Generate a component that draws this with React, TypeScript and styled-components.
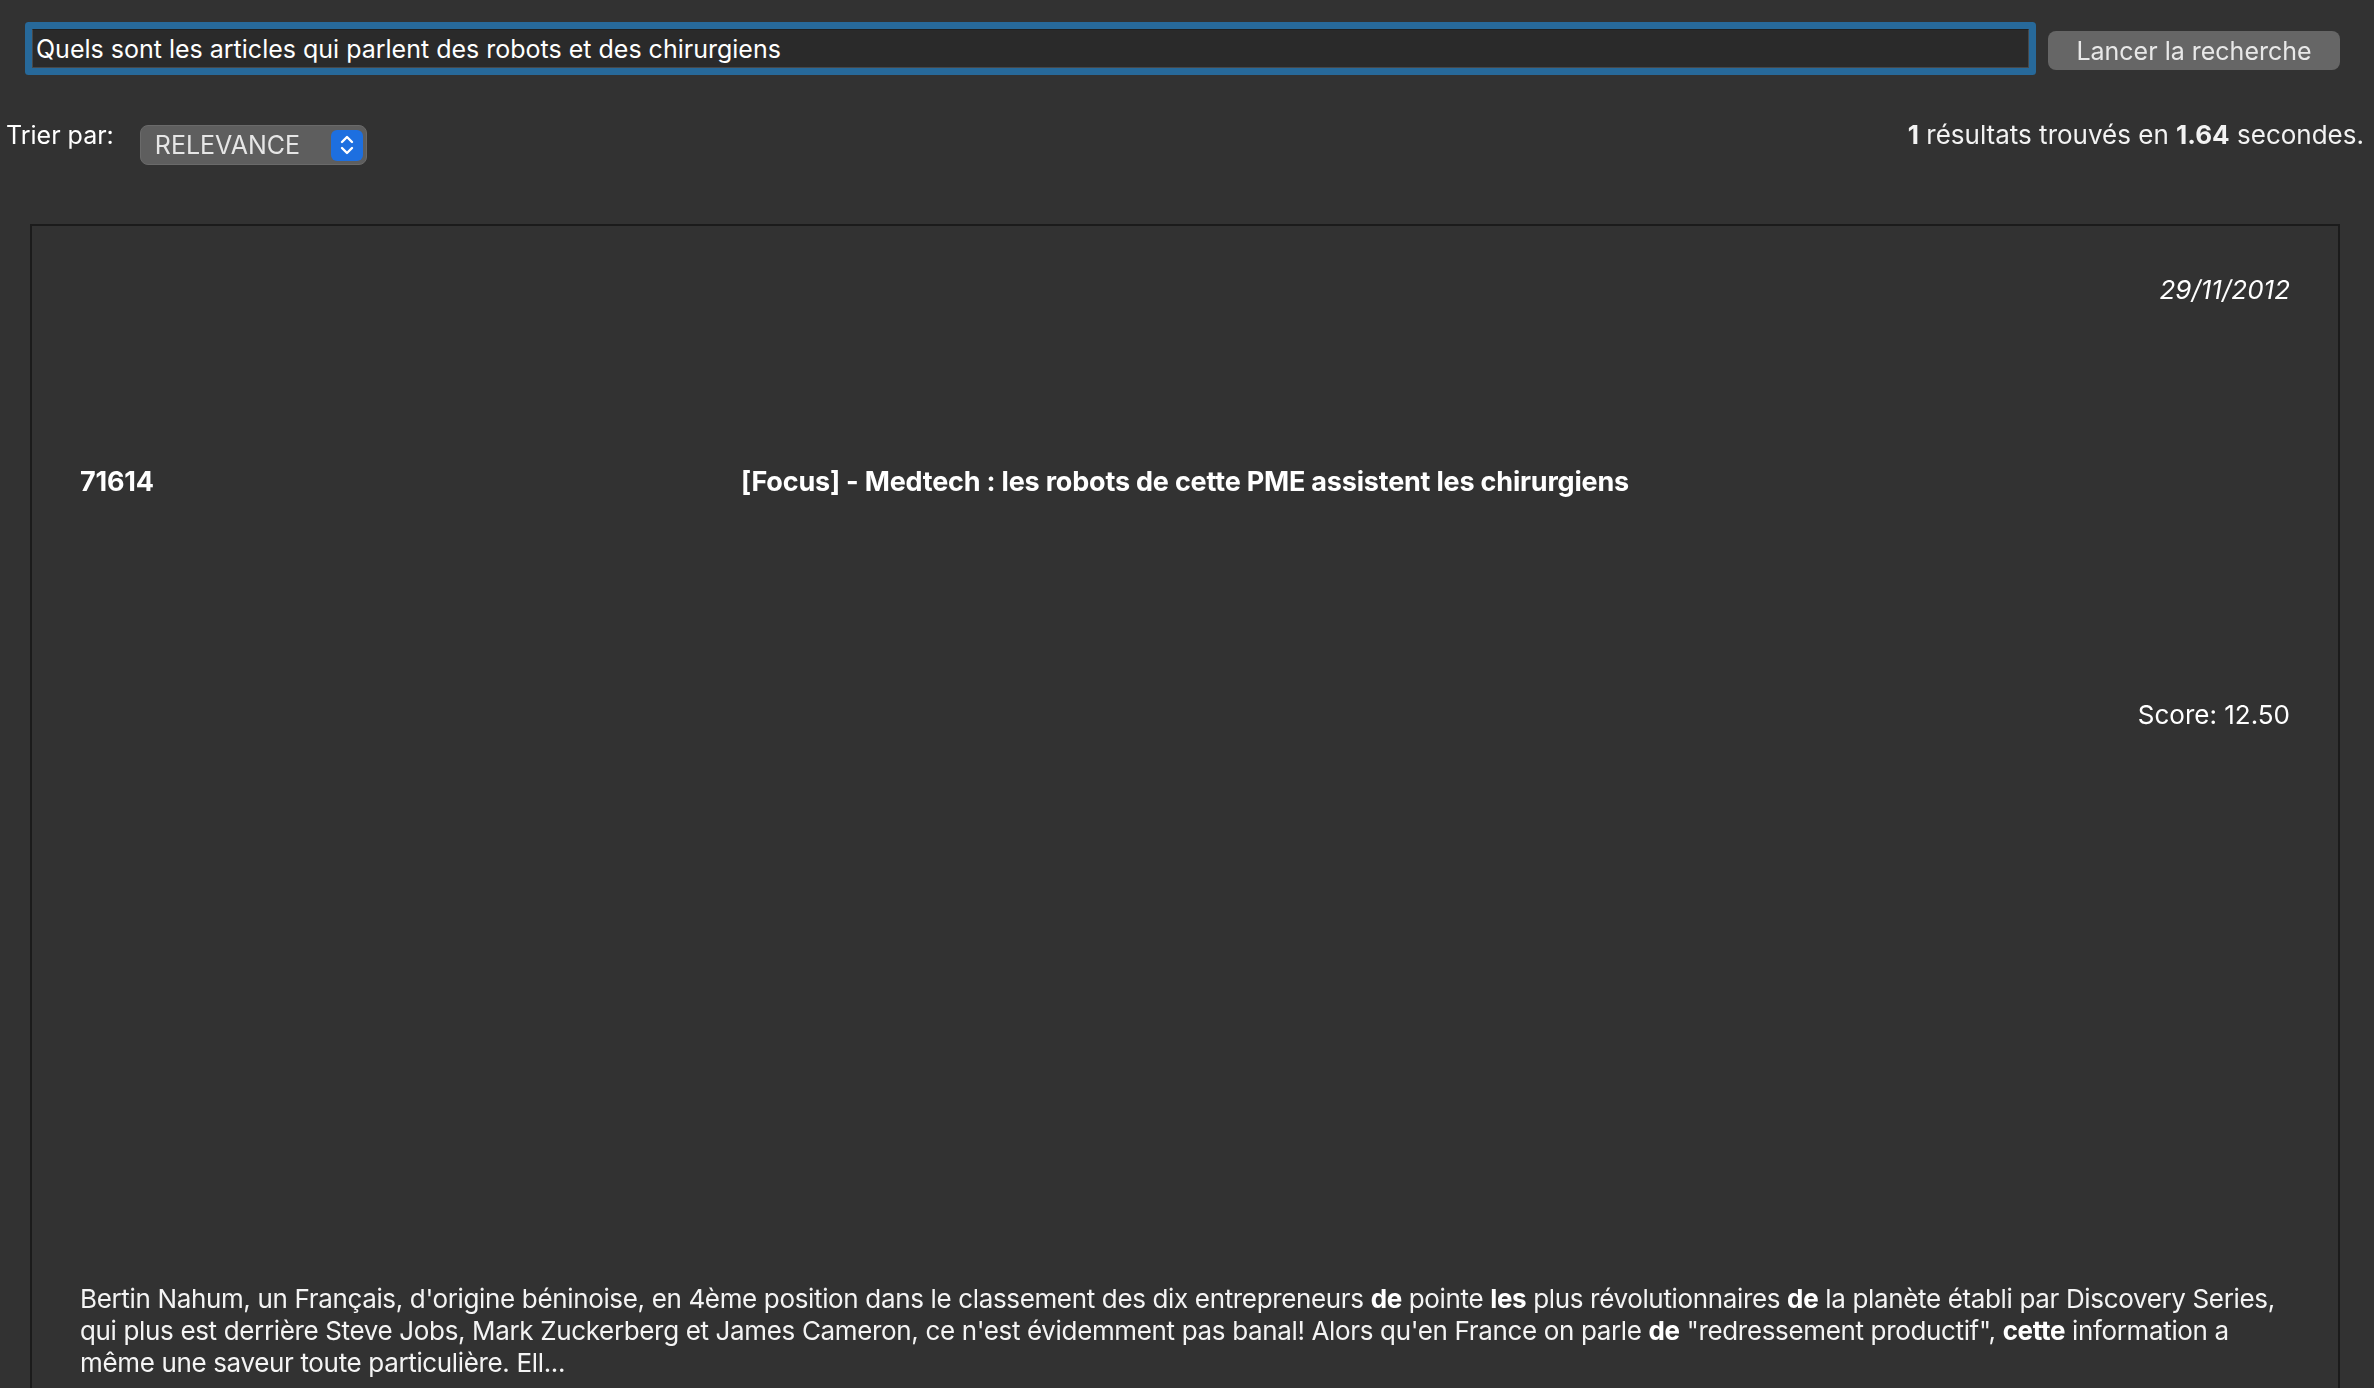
import React from 'react'
import styled, { createGlobalStyle } from 'styled-components'

const GlobalStyle = createGlobalStyle`
    html, body {
        margin: 0;
        padding: 0;
        background-color: #323232;
        color: #ffffff;
        font-family: Inter, "Noto Sans", "Liberation Sans", sans-serif;
    }
`

const Page = styled.div`
    min-height: 100vh;
    background-color: #323232;
`

const SearchBar = styled.form`
    display: flex;
    align-items: flex-start;
    padding: 29px 34px 0 32px;
`

const SearchInput = styled.input`
    flex: 1;
    height: 39px;
    box-sizing: border-box;
    padding: 0 3px;
    background-color: #2a2a2a;
    border: 1px solid #484848;
    border-top-color: #202020;
    border-radius: 1px;
    box-shadow: 0 0 0 7px #27699a;
    color: #ffffff;
    caret-color: #ffffff;
    font-family: inherit;
    font-size: 25px;
    outline: none;
`

const SearchButton = styled.button`
    flex-shrink: 0;
    width: 292px;
    height: 39px;
    margin: 2px 0 0 19px;
    padding: 0;
    border: none;
    border-radius: 8px;
    background-color: #666666;
    color: #e8e8e8;
    font-family: inherit;
    font-size: 25px;

    &:hover {
        opacity: 0.8;
        cursor: pointer;
    }
`

const Toolbar = styled.div`
    display: flex;
    align-items: flex-start;
    justify-content: space-between;
    margin-top: 49px;
    padding: 0 10px 0 6px;
    font-size: 26px;
    line-height: 32px;
`

const SortGroup = styled.div`
    display: flex;
    align-items: flex-start;
    gap: 26px;
    font-size: 25px;
`

const SelectBox = styled.div`
    display: flex;
    align-items: center;
    width: 227px;
    height: 40px;
    box-sizing: border-box;
    margin-top: 6px;
    padding: 0 3px 0 14px;
    background-color: #5e5e5e;
    border: 1px solid #6a6a6a;
    border-radius: 8px;
`

const Select = styled.select`
    flex: 1;
    appearance: none;
    border: none;
    background: transparent;
    color: #e6e6e6;
    font-family: inherit;
    font-size: 25px;
    padding: 0;
    outline: none;
`

const ChevronBox = styled.div`
    display: flex;
    align-items: center;
    justify-content: center;
    width: 32px;
    height: 31px;
    border-radius: 6px;
    background-color: #1d6fe0;
    pointer-events: none;
`

const Stats = styled.div`
    color: #f2f2f2;
`

const Card = styled.div`
    margin: 59px 34px 0 30px;
    padding: 48px;
    border: 2px solid #1b1b1b;
    font-size: 26px;
    line-height: 32px;
`

const DateLine = styled.div`
    text-align: right;
    font-style: italic;
`

const TitleRow = styled.div`
    display: grid;
    grid-template-columns: 1fr auto 1fr;
    margin-top: 160px;
    font-size: 27px;
    font-weight: 700;
    letter-spacing: -0.2px;
`

const Score = styled.div`
    margin-top: 201px;
    text-align: right;
`

const Snippet = styled.p`
    margin: 552px 0 0 0;
    color: #f4f4f4;
    letter-spacing: -0.35px;
`

const Hit = styled.strong`
    font-weight: 700;
    color: #ffffff;
`

function Chevrons() {
    return (
        <svg width="16" height="22" viewBox="0 0 16 22" fill="none" stroke="#ffffff" strokeWidth="2.4" strokeLinecap="round" strokeLinejoin="round">
            <polyline points="3,8 8,3 13,8" />
            <polyline points="3,14 8,19 13,14" />
        </svg>
    )
}

export default function App() {
    return (
        <Page>
            <GlobalStyle />
            <SearchBar onSubmit={(e) => e.preventDefault()}>
                <SearchInput
                    autoFocus
                    defaultValue="Quels sont les articles qui parlent des robots et des chirurgiens"
                />
                <SearchButton type="submit">Lancer la recherche</SearchButton>
            </SearchBar>

            <Toolbar>
                <SortGroup>
                    <span>Trier par:</span>
                    <SelectBox>
                        <Select defaultValue="relevance">
                            <option value="relevance">RELEVANCE</option>
                            <option value="date">DATE</option>
                        </Select>
                        <ChevronBox>
                            <Chevrons />
                        </ChevronBox>
                    </SelectBox>
                </SortGroup>
                <Stats>
                    <b>1</b> résultats trouvés en <b>1.64</b> secondes.
                </Stats>
            </Toolbar>

            <Card>
                <DateLine>29/11/2012</DateLine>
                <TitleRow>
                    <span>71614</span>
                    <span>[Focus] - Medtech : les robots de cette PME assistent les chirurgiens</span>
                    <span />
                </TitleRow>
                <Score>Score: 12.50</Score>
                <Snippet>
                    Bertin Nahum, un Français, d'origine béninoise, en 4ème position dans le classement des dix entrepreneurs <Hit>de</Hit> pointe <Hit>les</Hit> plus révolutionnaires <Hit>de</Hit> la planète établi par Discovery Series, qui plus est derrière Steve Jobs, Mark Zuckerberg et James Cameron, ce n'est évidemment pas banal! Alors qu'en France on parle <Hit>de</Hit> "redressement productif", <Hit>cette</Hit> information a même une saveur toute particulière. Ell...
                </Snippet>
            </Card>
        </Page>
    )
}
